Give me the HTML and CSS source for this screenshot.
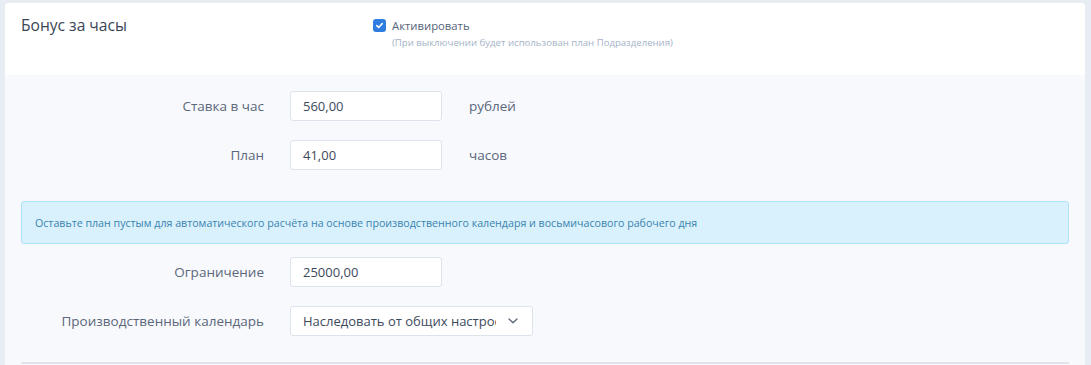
FILE: index.html
```html
<!DOCTYPE html>
<html lang="ru">
<head>
<meta charset="utf-8">
<title>Бонус за часы</title>
<link rel="stylesheet" href="styles.css">
</head>
<body>
<div class="card">
  <div class="card-head">
    <div class="title">Бонус за часы</div>
    <div class="activate">
      <label class="check">
        <span class="box"><svg width="9" height="9" viewBox="0 0 10 10"><path d="M2 5.2 L4.1 7.2 L8 2.9" fill="none" stroke="#fff" stroke-width="1.8" stroke-linecap="round" stroke-linejoin="round"/></svg></span>
        <span class="check-label">Активировать</span>
      </label>
      <div class="hint">(При выключении будет использован план Подразделения)</div>
    </div>
  </div>
  <div class="card-body">
    <div class="row">
      <div class="label">Ставка в час</div>
      <div class="input">560,00</div>
      <div class="unit">рублей</div>
    </div>
    <div class="row">
      <div class="label">План</div>
      <div class="input">41,00</div>
      <div class="unit">часов</div>
    </div>
    <div class="alert">Оставьте план пустым для автоматического расчёта на основе производственного календаря и восьмичасового рабочего дня</div>
    <div class="row">
      <div class="label">Ограничение</div>
      <div class="input">25000,00</div>
    </div>
    <div class="row">
      <div class="label">Производственный календарь</div>
      <div class="select">
        <span class="select-text">Наследовать от общих настроек</span>
        <svg class="chev" width="10" height="6" viewBox="0 0 10 6"><path d="M1 1 L5 4.8 L9 1" fill="none" stroke="#5a6678" stroke-width="1.3" stroke-linecap="round" stroke-linejoin="round"/></svg>
      </div>
    </div>
    <div class="divider"></div>
  </div>
</div>
</body>
</html>
```

FILE: styles.css
```css
html, body {
  margin: 0;
  padding: 0;
}
body {
  background: #e8ecf3;
  font-family: "Open Sans", "Noto Sans", sans-serif;
  color: #4b5869;
  padding: 3px 6px 0 5px;
  height: 365px;
  box-sizing: border-box;
  overflow: hidden;
}
.card {
  background: #f8f9fd;
  border-radius: 4px 4px 0 0;
  overflow: hidden;
  height: 100%;
}
.card-head {
  background: #fff;
  height: 72px;
  display: grid;
  grid-template-columns: 352px 1fr;
  padding: 0 16px;
}
.title {
  font-size: 15.6px;
  line-height: 22px;
  color: #3a4555;
  padding-top: 11px;
}
.activate {
  padding-top: 13px;
}
.check {
  display: flex;
  align-items: center;
  gap: 6px;
}
.box {
  width: 13px;
  height: 13px;
  border-radius: 3px;
  background: #2f7de1;
  display: flex;
  align-items: center;
  justify-content: center;
}
.check-label {
  font-size: 11.3px;
  line-height: 19px;
  color: #56637a;
}
.hint {
  font-size: 9.6px;
  line-height: 13px;
  color: #a5b3c7;
  margin-left: 19px;
  margin-top: 1px;
}
.card-body {
  padding: 16px 16px 0 16px;
}
.row {
  display: flex;
  align-items: center;
  height: 30px;
  margin-bottom: 19px;
}
.label {
  width: 243px;
  text-align: right;
  font-size: 13.5px;
  color: #5b677a;
  padding-right: 26px;
}
.input {
  width: 152px;
  height: 30px;
  box-sizing: border-box;
  background: #fff;
  border: 1px solid #dde3ec;
  border-radius: 3px;
  font-size: 13px;
  color: #3d4a5d;
  padding: 0 12px;
  line-height: 28px;
}
.unit {
  margin-left: 27px;
  font-size: 13.5px;
  color: #5b677a;
}
.alert {
  background: #d8f1fd;
  border: 1px solid #aee2f8;
  border-radius: 3px;
  height: 43px;
  box-sizing: border-box;
  padding: 0 13px;
  display: flex;
  align-items: center;
  font-size: 10.65px;
  color: #3c83ad;
  margin: 31px 0 13px 0;
}
.select {
  width: 243px;
  height: 30px;
  box-sizing: border-box;
  background: #fff;
  border: 1px solid #dde3ec;
  border-radius: 3px;
  display: flex;
  align-items: center;
  padding: 0 14px 0 12px;
  gap: 12px;
}
.select-text {
  flex: 1;
  font-size: 13px;
  color: #3d4a5d;
  white-space: nowrap;
  overflow: hidden;
}
.chev {
  flex: none;
}
.divider {
  height: 2px;
  background: #dfe4ee;
  margin-top: 26px;
}
```
